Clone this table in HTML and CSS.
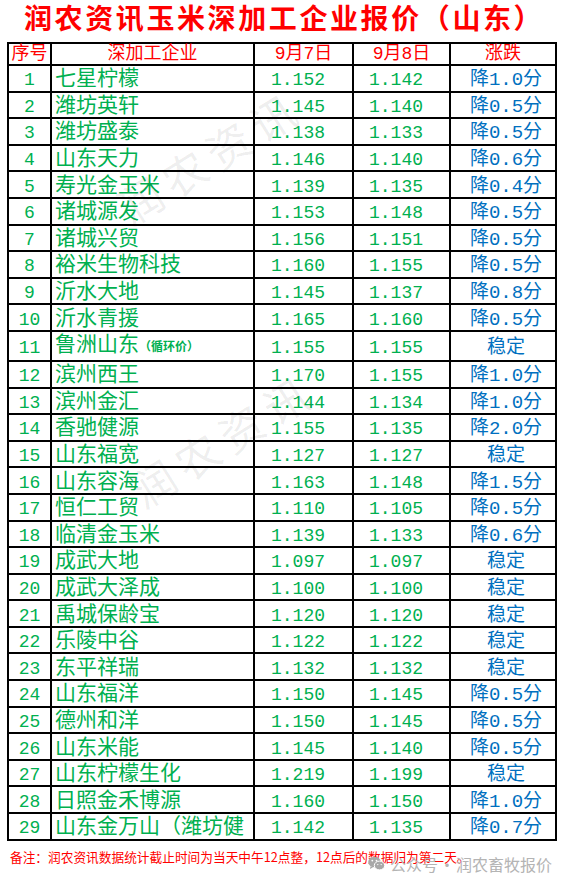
FILE: index.html
```html
<!DOCTYPE html>
<html lang="zh">
<head>
<meta charset="utf-8">
<title>润农资讯玉米深加工企业报价（山东）</title>
<link rel="stylesheet" href="styles.css">
</head>
<body>
<div class="page">
  <h1 class="title">润农资讯玉米深加工企业报价（山东）</h1>
  <div class="table-wrap">
    <table class="price">
      <colgroup>
        <col class="c-no"><col class="c-name"><col class="c-d1"><col class="c-d2"><col class="c-chg">
      </colgroup>
      <thead>
        <tr><th>序号</th><th>深加工企业</th><th>9月7日</th><th>9月8日</th><th>涨跌</th></tr>
      </thead>
      <tbody>
        <tr><td class="no">1</td><td class="name"><div>七星柠檬</div></td><td class="num">1.152</td><td class="num">1.142</td><td class="chg">降1.0分</td></tr>
        <tr><td class="no">2</td><td class="name"><div>潍坊英轩</div></td><td class="num">1.145</td><td class="num">1.140</td><td class="chg">降0.5分</td></tr>
        <tr><td class="no">3</td><td class="name"><div>潍坊盛泰</div></td><td class="num">1.138</td><td class="num">1.133</td><td class="chg">降0.5分</td></tr>
        <tr><td class="no">4</td><td class="name"><div>山东天力</div></td><td class="num">1.146</td><td class="num">1.140</td><td class="chg">降0.6分</td></tr>
        <tr><td class="no">5</td><td class="name"><div>寿光金玉米</div></td><td class="num">1.139</td><td class="num">1.135</td><td class="chg">降0.4分</td></tr>
        <tr><td class="no">6</td><td class="name"><div>诸城源发</div></td><td class="num">1.153</td><td class="num">1.148</td><td class="chg">降0.5分</td></tr>
        <tr><td class="no">7</td><td class="name"><div>诸城兴贸</div></td><td class="num">1.156</td><td class="num">1.151</td><td class="chg">降0.5分</td></tr>
        <tr><td class="no">8</td><td class="name"><div>裕米生物科技</div></td><td class="num">1.160</td><td class="num">1.155</td><td class="chg">降0.5分</td></tr>
        <tr><td class="no">9</td><td class="name"><div>沂水大地</div></td><td class="num">1.145</td><td class="num">1.137</td><td class="chg">降0.8分</td></tr>
        <tr><td class="no">10</td><td class="name"><div>沂水青援</div></td><td class="num">1.165</td><td class="num">1.160</td><td class="chg">降0.5分</td></tr>
        <tr><td class="no">11</td><td class="name"><div>鲁洲山东<span class="tag">（循环价）</span></div></td><td class="num">1.155</td><td class="num">1.155</td><td class="chg">稳定</td></tr>
        <tr><td class="no">12</td><td class="name"><div>滨州西王</div></td><td class="num">1.170</td><td class="num">1.155</td><td class="chg">降1.0分</td></tr>
        <tr><td class="no">13</td><td class="name"><div>滨州金汇</div></td><td class="num">1.144</td><td class="num">1.134</td><td class="chg">降1.0分</td></tr>
        <tr><td class="no">14</td><td class="name"><div>香驰健源</div></td><td class="num">1.155</td><td class="num">1.135</td><td class="chg">降2.0分</td></tr>
        <tr><td class="no">15</td><td class="name"><div>山东福宽</div></td><td class="num">1.127</td><td class="num">1.127</td><td class="chg">稳定</td></tr>
        <tr><td class="no">16</td><td class="name"><div>山东容海</div></td><td class="num">1.163</td><td class="num">1.148</td><td class="chg">降1.5分</td></tr>
        <tr><td class="no">17</td><td class="name"><div>恒仁工贸</div></td><td class="num">1.110</td><td class="num">1.105</td><td class="chg">降0.5分</td></tr>
        <tr><td class="no">18</td><td class="name"><div>临清金玉米</div></td><td class="num">1.139</td><td class="num">1.133</td><td class="chg">降0.6分</td></tr>
        <tr><td class="no">19</td><td class="name"><div>成武大地</div></td><td class="num">1.097</td><td class="num">1.097</td><td class="chg">稳定</td></tr>
        <tr><td class="no">20</td><td class="name"><div>成武大泽成</div></td><td class="num">1.100</td><td class="num">1.100</td><td class="chg">稳定</td></tr>
        <tr><td class="no">21</td><td class="name"><div>禹城保龄宝</div></td><td class="num">1.120</td><td class="num">1.120</td><td class="chg">稳定</td></tr>
        <tr><td class="no">22</td><td class="name"><div>乐陵中谷</div></td><td class="num">1.122</td><td class="num">1.122</td><td class="chg">稳定</td></tr>
        <tr><td class="no">23</td><td class="name"><div>东平祥瑞</div></td><td class="num">1.132</td><td class="num">1.132</td><td class="chg">稳定</td></tr>
        <tr><td class="no">24</td><td class="name"><div>山东福洋</div></td><td class="num">1.150</td><td class="num">1.145</td><td class="chg">降0.5分</td></tr>
        <tr><td class="no">25</td><td class="name"><div>德州和洋</div></td><td class="num">1.150</td><td class="num">1.145</td><td class="chg">降0.5分</td></tr>
        <tr><td class="no">26</td><td class="name"><div>山东米能</div></td><td class="num">1.145</td><td class="num">1.140</td><td class="chg">降0.5分</td></tr>
        <tr><td class="no">27</td><td class="name"><div>山东柠檬生化</div></td><td class="num">1.219</td><td class="num">1.199</td><td class="chg">稳定</td></tr>
        <tr><td class="no">28</td><td class="name"><div>日照金禾博源</div></td><td class="num">1.160</td><td class="num">1.150</td><td class="chg">降1.0分</td></tr>
        <tr><td class="no">29</td><td class="name"><div>山东金万山（潍坊健</div></td><td class="num">1.142</td><td class="num">1.135</td><td class="chg">降0.7分</td></tr>
      </tbody>
    </table>
    <div class="wm wm1">润农资讯</div>
    <div class="wm wm2">润农资讯</div>
  </div>
  <div class="foot">
    <p class="note">备注：润农资讯数据统计截止时间为当天中午12点整，12点后的数据归为第二天。</p>
    <div class="brand">
      <svg class="wx" width="17" height="15" viewBox="0 0 17 15">
        <ellipse cx="6.5" cy="6" rx="6.3" ry="5.3" fill="#a8a8a8"/>
        <path d="M2.5 10.2 L2 13 L5 11.2 Z" fill="#a8a8a8"/>
        <ellipse cx="11.5" cy="9.5" rx="5.2" ry="4.4" fill="#a8a8a8" stroke="#fff" stroke-width="1"/>
        <circle cx="4.3" cy="4.6" r="0.9" fill="#fff"/>
        <circle cx="8.5" cy="4.6" r="0.9" fill="#fff"/>
        <circle cx="9.8" cy="8.6" r="0.7" fill="#fff"/>
        <circle cx="13.2" cy="8.6" r="0.7" fill="#fff"/>
      </svg>
      <span>公众号<span class="dot">·</span>润农畜牧报价</span>
    </div>
  </div>
</div>
</body>
</html>
```

FILE: styles.css
```css
html, body {
  margin: 0;
  padding: 0;
  background: #ffffff;
}

.page {
  width: 561px;
  height: 880px;
  overflow: hidden;
}

.title {
  margin: 0;
  height: 42px;
  padding-left: 24px;
  font-family: "Noto Sans CJK SC", sans-serif;
  font-weight: 700;
  font-size: 28px;
  line-height: 34px;
  letter-spacing: 2.6px;
  color: #ff0000;
  white-space: nowrap;
}

.table-wrap {
  position: relative;
  padding-left: 7px;
}

.price {
  border-collapse: collapse;
  table-layout: fixed;
  width: 548px;
}

.c-no { width: 43px; }
.c-name { width: 203px; }
.c-d1 { width: 99px; }
.c-d2 { width: 97px; }
.c-chg { width: 106px; }

.price th,
.price td {
  border: 2px solid #000;
  padding: 0;
  white-space: nowrap;
}

.price th {
  height: 20px;
  font-family: "Liberation Mono", "Noto Sans CJK SC", monospace;
  font-weight: 400;
  font-size: 18px;
  line-height: 20px;
  color: #ff0000;
  text-align: center;
}

.price tbody tr {
  height: 26.6px;
}

.price td {
  font-family: "Liberation Mono", "Noto Sans CJK SC", monospace;
  font-size: 18px;
  line-height: 19px;
  padding-top: 5px;
  color: #00b050;
  text-align: center;
}

.price td.name {
  padding-top: 0;
  text-align: left;
  font-family: "Noto Sans CJK SC", sans-serif;
  font-size: 21px;
  line-height: 20px;
}

.price td.name div {
  padding: 0 0 4px 3px;
  white-space: nowrap;
}

.tag {
  font-size: 12px;
  font-weight: 700;
}

.price td.num {
  padding-right: 11px;
}

.price td.chg {
  color: #0070c0;
  font-size: 19px;
  padding-left: 6px;
}

.wm {
  position: absolute;
  font-family: "Noto Sans CJK SC", sans-serif;
  font-size: 44px;
  font-weight: 400;
  letter-spacing: 8px;
  color: rgba(0, 0, 0, 0.07);
  white-space: nowrap;
  transform: rotate(-32deg);
  transform-origin: center;
  pointer-events: none;
}

.wm1 {
  left: 105px;
  top: 82px;
}

.wm2 {
  left: 118px;
  top: 365px;
}

.foot {
  position: relative;
  height: 42px;
}

.note {
  margin: 0;
  padding: 8px 0 0 10px;
  font-family: "Noto Sans CJK SC", sans-serif;
  font-size: 12.7px;
  line-height: 16px;
  color: #ff0000;
  white-space: nowrap;
}

.brand {
  position: absolute;
  left: 368px;
  top: 14px;
  display: flex;
  align-items: center;
  gap: 5px;
  font-family: "Noto Sans CJK SC", sans-serif;
  font-size: 16px;
  line-height: 18px;
  color: #b4b4b4;
  white-space: nowrap;
}

.dot {
  display: inline-block;
  width: 18px;
  text-align: center;
}

.wx {
  display: block;
}
```
